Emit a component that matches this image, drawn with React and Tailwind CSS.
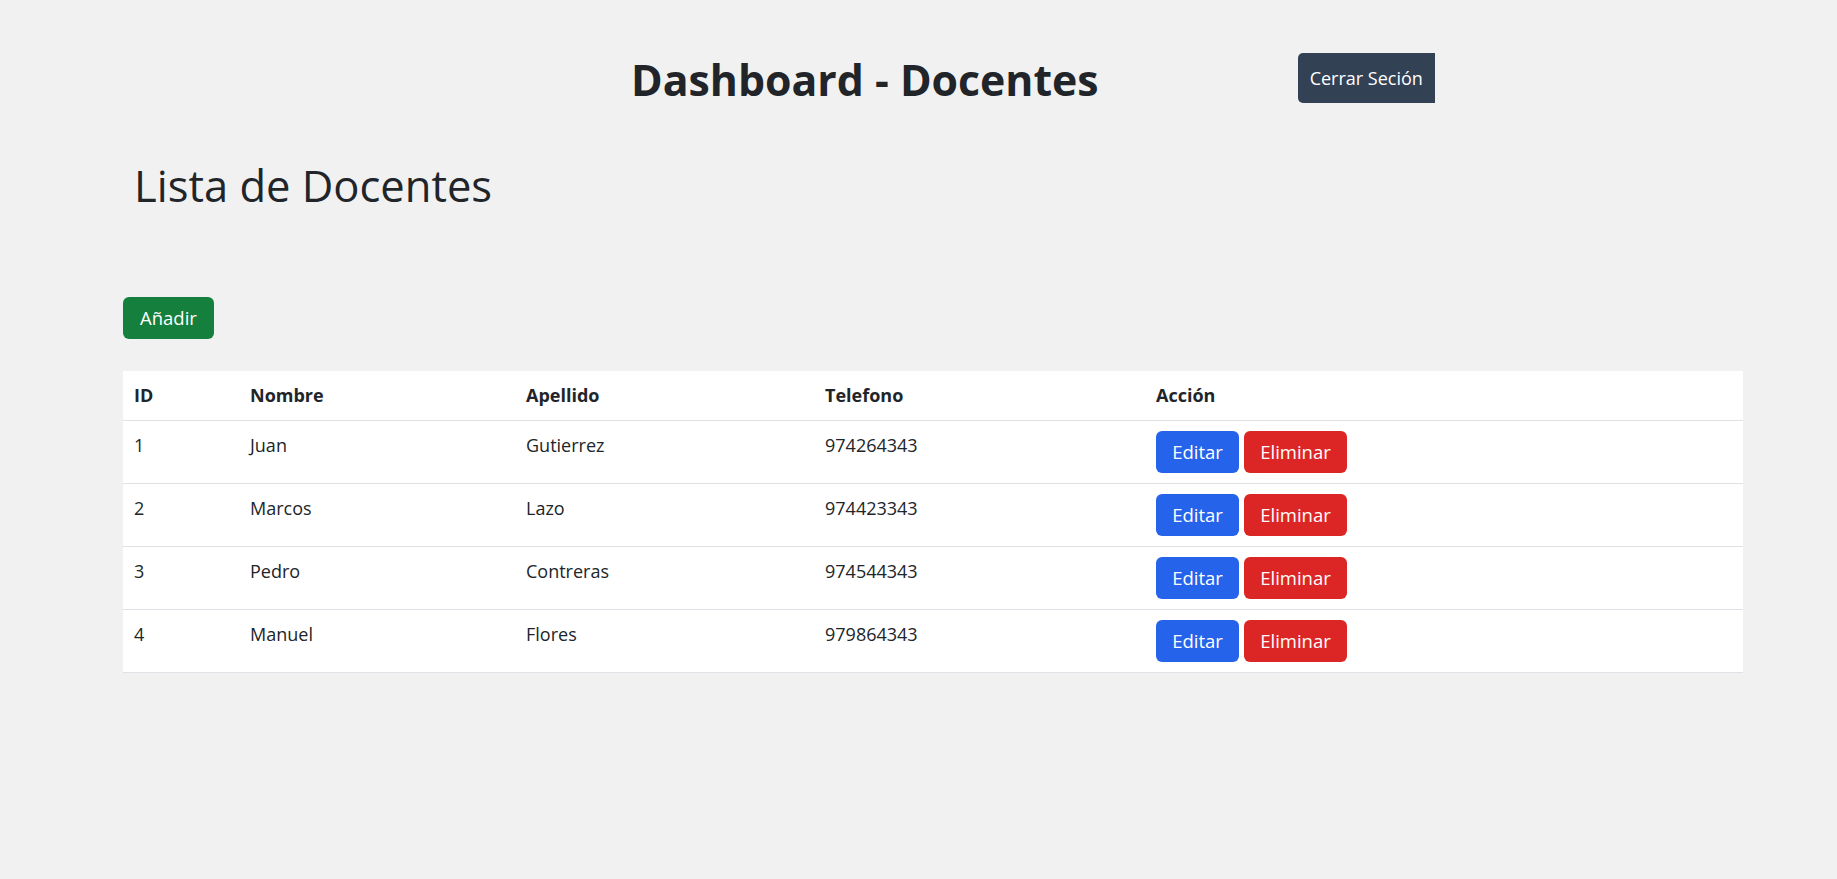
import React from "react";

const docentes = [
  { id: 1, nombre: "Juan", apellido: "Gutierrez", telefono: "974264343" },
  { id: 2, nombre: "Marcos", apellido: "Lazo", telefono: "974423343" },
  { id: 3, nombre: "Pedro", apellido: "Contreras", telefono: "974544343" },
  { id: 4, nombre: "Manuel", apellido: "Flores", telefono: "979864343" },
];

export default function App() {
  return (
    <div className="min-h-screen bg-[#f1f1f1] text-[#212529] font-['Open_Sans',_'Noto_Sans',_sans-serif]">
      {/* header */}
      <header className="flex items-start pt-[53px] pl-[631px]">
        <h1 className="mt-[2px] text-[42.8px] leading-[50px] font-bold">Dashboard - Docentes</h1>
        <button className="ml-[199px] h-[50px] px-[12px] bg-[#334155] text-white text-[18px] rounded-l-[5px]">
          Cerrar Seción
        </button>
      </header>

      <main className="pl-[123px] pr-[94px]">
        <h2 className="mt-[53px] pl-[11px] text-[43.5px] leading-[56px] font-normal">Lista de Docentes</h2>

        <div className="mt-[83px]">
          <button className="h-[42px] px-[17px] bg-[#15803d] text-white text-[18.5px] rounded-[6px]">Añadir</button>
        </div>

        <table className="mt-[32px] w-[1620px] table-fixed bg-white border-collapse text-[18px]">
          <colgroup>
            <col className="w-[116px]" />
            <col className="w-[276px]" />
            <col className="w-[299px]" />
            <col className="w-[331px]" />
            <col />
          </colgroup>
          <thead>
            <tr className="border-b border-[#dee2e6]">
              <th className="text-left font-bold px-[11px] py-[10px] leading-[29px]">ID</th>
              <th className="text-left font-bold px-[11px] py-[10px] leading-[29px]">Nombre</th>
              <th className="text-left font-bold px-[11px] py-[10px] leading-[29px]">Apellido</th>
              <th className="text-left font-bold px-[11px] py-[10px] leading-[29px]">Telefono</th>
              <th className="text-left font-bold px-[11px] py-[10px] leading-[29px]">Acción</th>
            </tr>
          </thead>
          <tbody>
            {docentes.map((d) => (
              <tr key={d.id} className="border-b border-[#dee2e6]">
                <td className="align-top px-[11px] py-[10px] leading-[29px]">{d.id}</td>
                <td className="align-top px-[11px] py-[10px] leading-[29px]">{d.nombre}</td>
                <td className="align-top px-[11px] py-[10px] leading-[29px]">{d.apellido}</td>
                <td className="align-top px-[11px] py-[10px] leading-[29px]">{d.telefono}</td>
                <td className="align-top px-[11px] py-[10px]">
                  <div className="flex gap-[5px]">
                    <button className="h-[42px] w-[83px] bg-[#2563eb] text-white text-[18.5px] rounded-[6px]">Editar</button>
                    <button className="h-[42px] w-[103px] bg-[#dc2626] text-white text-[18.5px] rounded-[6px]">Eliminar</button>
                  </div>
                </td>
              </tr>
            ))}
          </tbody>
        </table>
      </main>
    </div>
  );
}
